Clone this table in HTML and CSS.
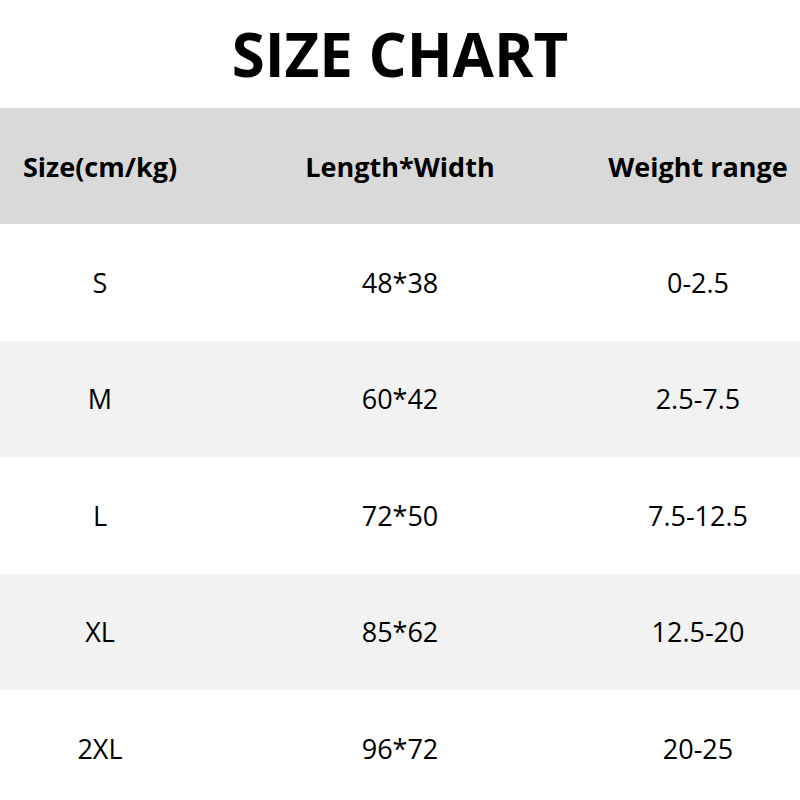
FILE: index.html
```html
<!DOCTYPE html>
<html>
<head>
<meta charset="utf-8">
<link rel="stylesheet" href="styles.css">
</head>
<body>
<div class="page">
  <h1 class="title">SIZE CHART</h1>
  <div class="table">
    <div class="row head"><div class="cell">Size(cm/kg)</div><div class="cell">Length*Width</div><div class="cell">Weight range</div></div>
    <div class="row"><div class="cell">S</div><div class="cell">48*38</div><div class="cell">0-2.5</div></div>
    <div class="row alt"><div class="cell">M</div><div class="cell">60*42</div><div class="cell">2.5-7.5</div></div>
    <div class="row"><div class="cell">L</div><div class="cell">72*50</div><div class="cell">7.5-12.5</div></div>
    <div class="row alt"><div class="cell">XL</div><div class="cell">85*62</div><div class="cell">12.5-20</div></div>
    <div class="row"><div class="cell">2XL</div><div class="cell">96*72</div><div class="cell">20-25</div></div>
  </div>
</div>
</body>
</html>
```

FILE: styles.css
```css
html, body {
  margin: 0;
  padding: 0;
  background: #ffffff;
}
body {
  font-family: "Open Sans", "Noto Sans", sans-serif;
  color: #000;
  width: 800px;
  height: 800px;
  overflow: hidden;
}
.page {
  display: flex;
  flex-direction: column;
}
.title {
  margin: 0;
  height: 108px;
  display: flex;
  align-items: center;
  justify-content: center;
  font-size: 60px;
  font-weight: 700;
  letter-spacing: 0;
}
.table {
  display: flex;
  flex-direction: column;
}
.row {
  display: grid;
  grid-template-columns: 1fr 2fr 1fr;
  height: 116.4px;
  align-items: center;
  font-size: 27px;
}
.row.head {
  background: #d9d9d9;
  font-weight: 700;
  font-size: 27px;
}
.row.alt {
  background: #f2f2f2;
}
.cell {
  text-align: center;
  white-space: nowrap;
}
.cell:last-child {
  padding-right: 4px;
}
```
